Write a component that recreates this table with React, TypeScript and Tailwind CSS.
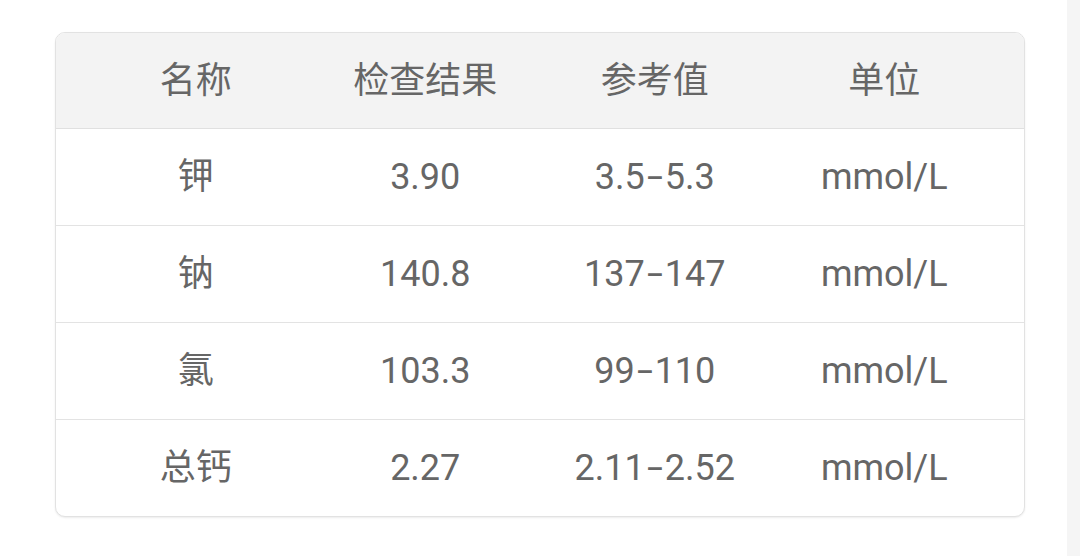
import React from "react";

const rows = [
  ["钾", "3.90", "3.5-5.3", "mmol/L"],
  ["钠", "140.8", "137-147", "mmol/L"],
  ["氯", "103.3", "99-110", "mmol/L"],
  ["总钙", "2.27", "2.11-2.52", "mmol/L"],
];

function Cell({ text }: { text: string }) {
  const parts = text.split("-");
  if (parts.length === 2) {
    return (
      <div className="text-center whitespace-nowrap">
        {parts[0]}
        <span className="inline-block w-[20px] text-center scale-x-[1.6]">-</span>
        {parts[1]}
      </div>
    );
  }
  return <div className="text-center">{text}</div>;
}

export default function App() {
  return (
    <div
      className="flex w-[1080px] h-[556px] bg-white overflow-hidden"
      style={{ fontFamily: 'Roboto, "Noto Sans CJK SC", sans-serif' }}
    >
      <div className="flex-1 pl-[55px] pr-[42px] pt-[32px]">
        <div className="border border-[#e2e2e2] rounded-[10px] overflow-hidden bg-white shadow-[0_1px_2px_rgba(0,0,0,0.08)]">
          <div className="grid grid-cols-4 px-[25px] h-[96px] items-center bg-[#f3f3f3] border-b border-[#e0e0e0] text-[36px] text-[#666]">
            <div className="text-center">名称</div>
            <div className="text-center">检查结果</div>
            <div className="text-center">参考值</div>
            <div className="text-center">单位</div>
          </div>
          {rows.map((r, i) => (
            <div
              key={i}
              className={`grid grid-cols-4 px-[25px] items-center text-[36px] text-[#666] ${
                i < rows.length - 1 ? "h-[97px] border-b border-[#e3e3e3]" : "h-[96px]"
              }`}
            >
              {r.map((c, j) => (
                <Cell key={j} text={c} />
              ))}
            </div>
          ))}
        </div>
      </div>
      <div className="w-[13px] bg-[#f5f5f5]" />
    </div>
  );
}
